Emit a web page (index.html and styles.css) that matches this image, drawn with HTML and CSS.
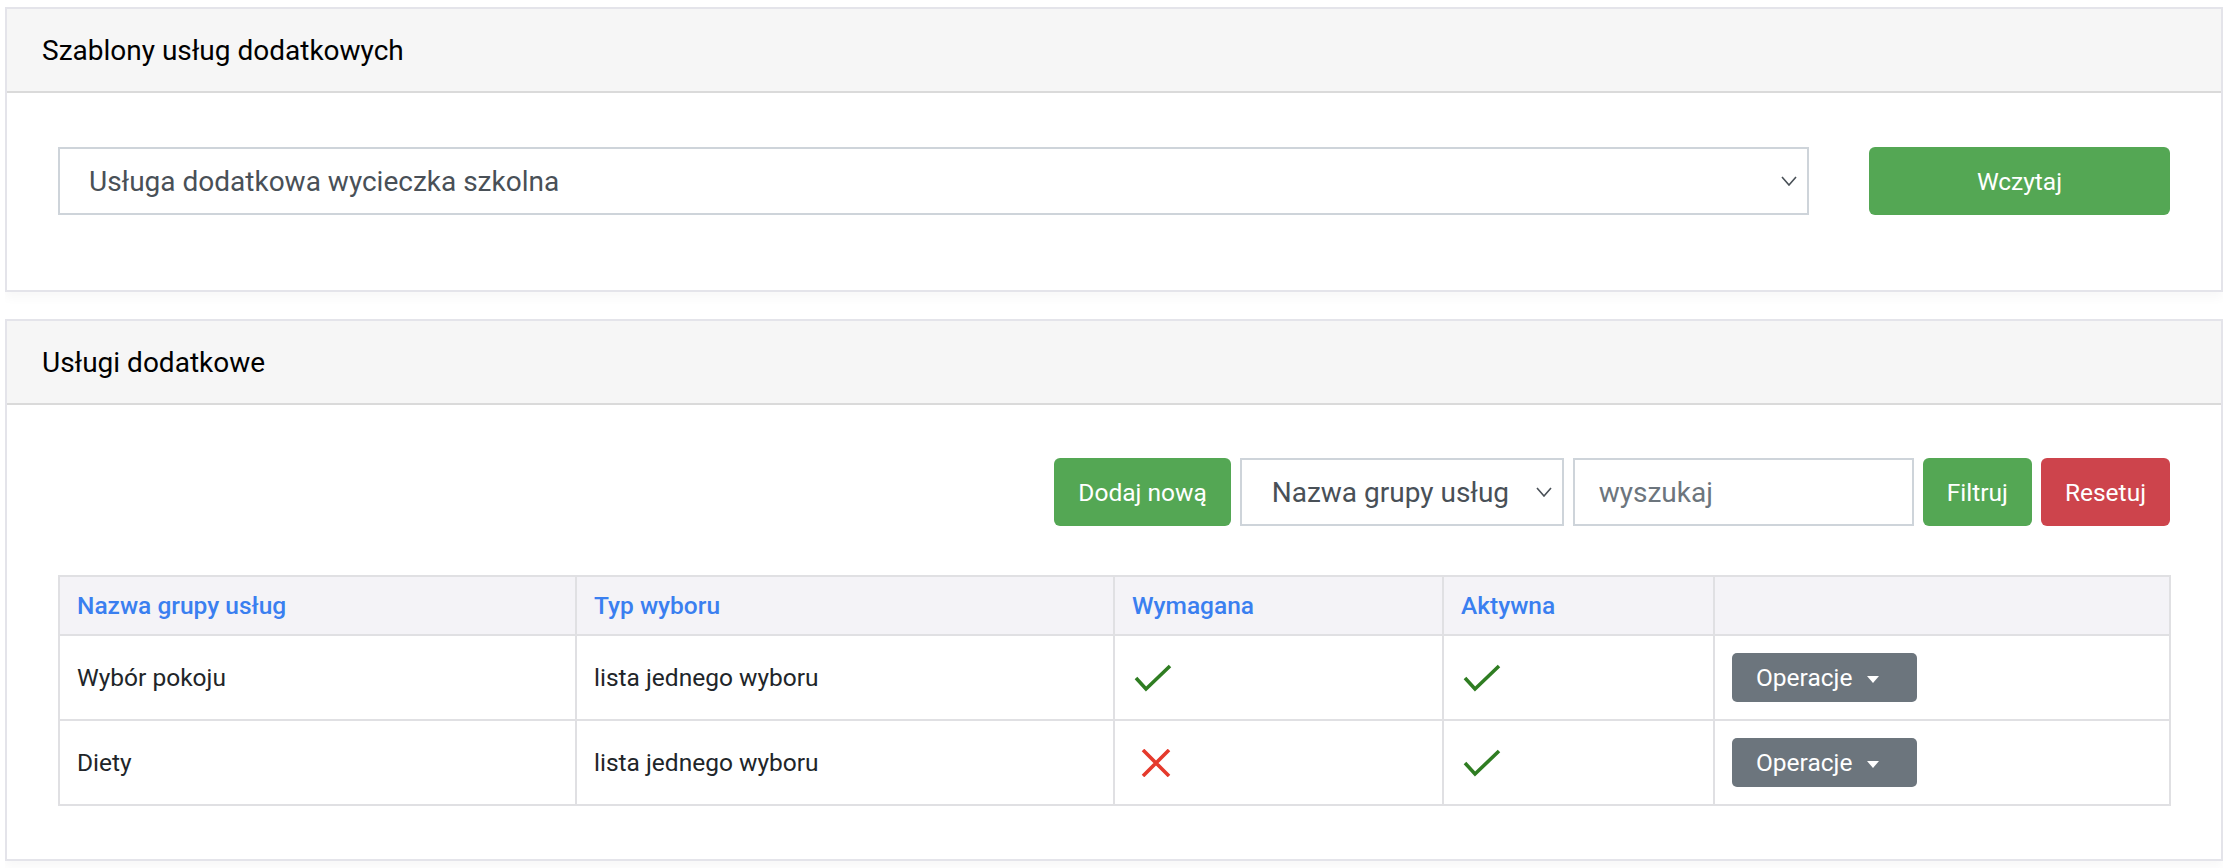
FILE: index.html
```html
<!DOCTYPE html>
<html lang="pl">
<head>
  <meta charset="UTF-8">
  <meta name="viewport" content="width=device-width, initial-scale=1.0">
  <title>Usługi dodatkowe</title>
  <link rel="stylesheet" href="styles.css">
</head>
<body>
  <div class="card">
    <div class="card-header">Szablony usług dodatkowych</div>
    <div class="card-body template-body">
      <div class="template-row">
        <select class="form-select template-select">
          <option>Usługa dodatkowa wycieczka szkolna</option>
        </select>
        <button class="btn btn-green btn-load">Wczytaj</button>
      </div>
    </div>
  </div>

  <div class="card">
    <div class="card-header">Usługi dodatkowe</div>
    <div class="card-body list-body">
      <div class="toolbar">
        <button class="btn btn-green">Dodaj nową</button>
        <select class="form-select filter-select">
          <option>Nazwa grupy usług</option>
        </select>
        <input class="form-input search-input" type="text" placeholder="wyszukaj">
        <button class="btn btn-green">Filtruj</button>
        <button class="btn btn-red">Resetuj</button>
      </div>

      <table class="services">
        <colgroup>
          <col style="width: 517px">
          <col style="width: 538px">
          <col style="width: 329px">
          <col style="width: 271px">
          <col style="width: 456px">
        </colgroup>
        <thead>
          <tr>
            <th>Nazwa grupy usług</th>
            <th>Typ wyboru</th>
            <th>Wymagana</th>
            <th>Aktywna</th>
            <th></th>
          </tr>
        </thead>
        <tbody>
          <tr>
            <td>Wybór pokoju</td>
            <td>lista jednego wyboru</td>
            <td>
              <svg class="icon" width="38" height="28" viewBox="0 0 38 28"><polyline points="2,14 12,25 36,2" fill="none" stroke="#2f7d22" stroke-width="3.6"/></svg>
            </td>
            <td>
              <svg class="icon" width="38" height="28" viewBox="0 0 38 28"><polyline points="2,14 12,25 36,2" fill="none" stroke="#2f7d22" stroke-width="3.6"/></svg>
            </td>
            <td><button class="btn-ops">Operacje<span class="caret"></span></button></td>
          </tr>
          <tr>
            <td>Diety</td>
            <td>lista jednego wyboru</td>
            <td>
              <svg class="icon icon-x" width="30" height="28" viewBox="0 0 30 28"><path d="M2 1 L28 27 M28 1 L2 27" fill="none" stroke="#e53a2c" stroke-width="3.6"/></svg>
            </td>
            <td>
              <svg class="icon" width="38" height="28" viewBox="0 0 38 28"><polyline points="2,14 12,25 36,2" fill="none" stroke="#2f7d22" stroke-width="3.6"/></svg>
            </td>
            <td><button class="btn-ops">Operacje<span class="caret"></span></button></td>
          </tr>
        </tbody>
      </table>
    </div>
  </div>
</body>
</html>
```

FILE: styles.css
```css
body {
  font-family: Roboto, "Liberation Sans", sans-serif;
  margin: 7px 5px;
  color: #212529;
  background-color: #fff;
}

.card {
  border: 2px solid #e4e4ea;
  background-color: #fff;
  margin-bottom: 27px;
  box-shadow: 0 6px 10px rgba(0, 0, 0, 0.03);
}

.card-header {
  background-color: #f6f6f6;
  border-bottom: 2px solid #dadada;
  font-size: 28px;
  line-height: 42px;
  padding: 21px 35px 19px;
  color: #000;
}

.template-body {
  padding: 54px 51px 75px;
}

.template-row {
  display: flex;
  gap: 60px;
  align-items: center;
}

.form-select,
.form-input {
  font-family: inherit;
  font-size: 28px;
  color: #495057;
  height: 68px;
  border: 2px solid #ced4da;
  border-radius: 0;
  background-color: #fff;
  padding: 0 28px;
  box-sizing: border-box;
  -webkit-appearance: none;
  appearance: none;
  outline: none;
}

.form-select {
  background-image: url("data:image/svg+xml,%3Csvg xmlns='http://www.w3.org/2000/svg' width='16' height='10' viewBox='0 0 16 10'%3E%3Cpolyline points='1,1 8,9 15,1' fill='none' stroke='%23495057' stroke-width='1.6'/%3E%3C/svg%3E");
  background-repeat: no-repeat;
  background-position: right 10px center;
}

.template-select {
  flex: 1;
  padding-left: 29px;
}

.form-input::placeholder {
  color: #6c757d;
}

.btn {
  font-family: inherit;
  font-size: 24.5px;
  color: #fff;
  height: 68px;
  border: none;
  border-radius: 6px;
  padding: 0 24px;
  cursor: pointer;
}

.btn-green {
  background-color: #54a754;
}

.btn-red {
  background-color: #cd444c;
}

.btn-load {
  width: 301px;
}

.list-body {
  padding: 53px 51px 53px;
}

.toolbar {
  display: flex;
  justify-content: flex-end;
  gap: 9px;
  margin-bottom: 49px;
}

.filter-select {
  width: 324px;
  padding-left: 30px;
}

.search-input {
  width: 341px;
  padding-left: 24px;
}

.services {
  width: 100%;
  border-collapse: collapse;
  table-layout: fixed;
  font-size: 24.5px;
}

.services th,
.services td {
  border: 2px solid #e0e0e3;
  text-align: left;
  padding: 0 17px;
}

.services th {
  background-color: #f4f3f7;
  color: #3a7ff0;
  font-weight: 500;
  height: 57px;
}

.services td {
  height: 83px;
}

.icon {
  display: block;
  margin-left: 2px;
}

.icon-x {
  margin-left: 9px;
}

.btn-ops {
  font-family: inherit;
  font-size: 24.5px;
  color: #fff;
  background-color: #6c757d;
  border: none;
  border-radius: 5px;
  width: 185px;
  height: 49px;
  padding: 0 0 0 24px;
  text-align: left;
  cursor: pointer;
}

.caret {
  display: inline-block;
  width: 0;
  height: 0;
  margin-left: 15px;
  vertical-align: 3px;
  border-top: 7px solid #fff;
  border-left: 6px solid transparent;
  border-right: 6px solid transparent;
}
```
